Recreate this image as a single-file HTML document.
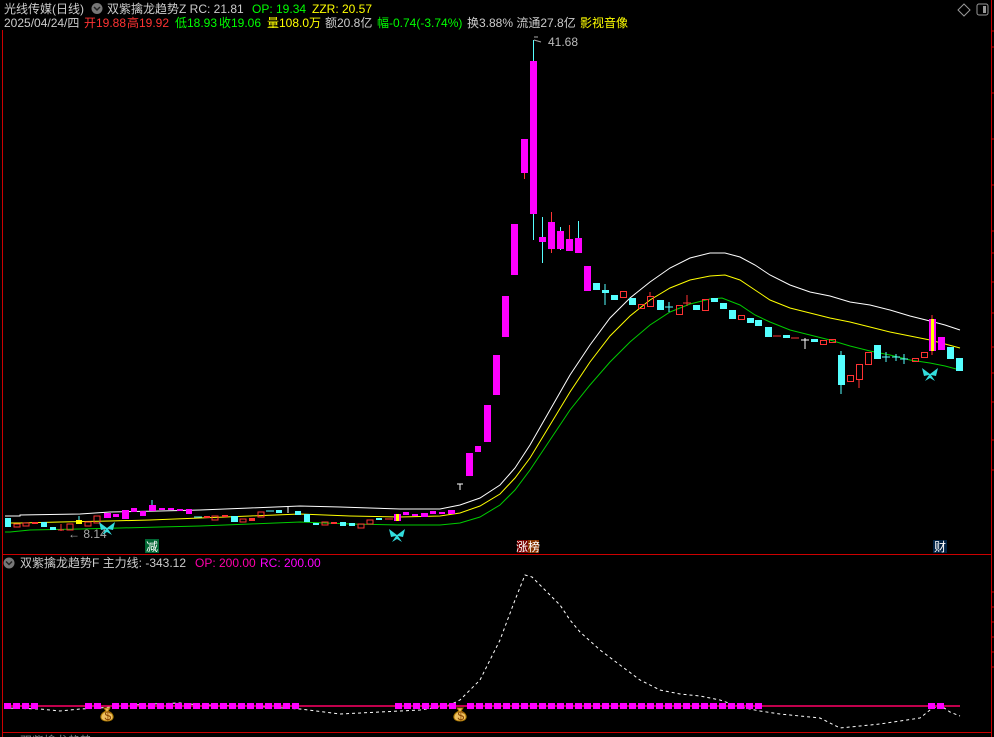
<!DOCTYPE html>
<html><head><meta charset="utf-8"><style>
html,body{margin:0;padding:0;background:#000;width:994px;height:737px;overflow:hidden}
svg{display:block}
text{font-family:"Liberation Sans","Noto Sans CJK SC",sans-serif;font-size:12px}
</style></head><body>
<svg width="994" height="737" viewBox="0 0 994 737" xmlns="http://www.w3.org/2000/svg">
<rect width="994" height="737" fill="#000"/>
<line x1="2.5" y1="30" x2="2.5" y2="737" stroke="#c00" stroke-width="1"/>
<line x1="991.5" y1="0" x2="991.5" y2="737" stroke="#c00"/>
<line x1="2" y1="554.5" x2="991" y2="554.5" stroke="#c00"/>
<line x1="2" y1="732.5" x2="991" y2="732.5" stroke="#c00"/>
<g stroke="#c00">
<line x1="991" y1="31" x2="994" y2="31"/><line x1="991" y1="47" x2="994" y2="47"/>
<line x1="991" y1="93" x2="994" y2="93"/><line x1="991" y1="139" x2="994" y2="139"/>
<line x1="991" y1="185" x2="994" y2="185"/><line x1="991" y1="231" x2="994" y2="231"/>
<line x1="991" y1="253" x2="994" y2="253"/><line x1="991" y1="282" x2="994" y2="282"/>
<line x1="991" y1="313" x2="994" y2="313"/><line x1="991" y1="347" x2="994" y2="347"/>
<line x1="991" y1="373" x2="994" y2="373"/><line x1="991" y1="402" x2="994" y2="402"/>
<line x1="991" y1="440" x2="994" y2="440"/><line x1="991" y1="470" x2="994" y2="470"/>
<line x1="991" y1="592" x2="994" y2="592"/><line x1="991" y1="607" x2="994" y2="607"/>
<line x1="991" y1="622" x2="994" y2="622"/><line x1="991" y1="637" x2="994" y2="637"/>
<line x1="991" y1="652" x2="994" y2="652"/><line x1="991" y1="667" x2="994" y2="667"/>
</g>
<path d="M964 4 L970 10 L964 16 L958 10 Z" fill="none" stroke="#999"/>
<rect x="977" y="4" width="11" height="11" rx="2" fill="none" stroke="#999"/>
<rect x="983" y="6" width="3" height="7" fill="#999"/>
<text x="4" y="13" fill="#ccc">光线传媒(日线)</text>
<circle cx="97" cy="8.5" r="5.5" fill="#777"/><path d="M94 7 L97 10 L100 7" stroke="#222" fill="none" stroke-width="1.5"/>
<text x="107" y="13" fill="#ccc">双紫擒龙趋势Z  RC: 21.81</text>
<text x="252" y="13" fill="#0f0">OP: 19.34</text>
<text x="312" y="13" fill="#ff0">ZZR: 20.57</text>
<text x="4" y="27" fill="#ccc">2025/04/24/四</text>
<text x="84" y="27" fill="#f33">开19.88</text>
<text x="127" y="27" fill="#f33">高19.92</text>
<text x="175" y="27" fill="#0f0">低18.93</text>
<text x="219" y="27" fill="#0f0">收19.06</text>
<text x="267" y="27" fill="#ff0">量108.0万</text>
<text x="325" y="27" fill="#ccc">额20.8亿</text>
<text x="377" y="27" fill="#0f0">幅-0.74(-3.74%)</text>
<text x="467" y="27" fill="#ccc">换3.88% 流通27.8亿</text>
<text x="580" y="27" fill="#ff0">影视音像</text>
<polyline fill="none" stroke="#fff" stroke-width="1" points="5,516 20,516 20,515 80,514 110,512 160,511 200,510 250,508 300,506 340,507 370,508 400,509 440,509 460,505 480,498 500,485 515,468 530,445 550,410 570,375 590,345 610,318 630,298 650,282 670,268 690,258 710,253 725,253 740,257 755,265 770,275 790,285 810,292 830,296 850,302 870,305 890,310 910,316 930,321 945,325 960,330"/>
<polyline fill="none" stroke="#ff0" stroke-width="1" points="5,523 20,523 60,522 110,521 150,520 200,518 250,516 300,514 350,516 400,517 440,516 460,513 480,506 500,494 515,478 530,458 550,425 570,392 590,362 610,336 630,316 650,300 670,288 690,280 710,276 725,275 740,280 755,290 770,300 790,308 810,313 830,318 850,322 870,327 890,332 910,336 930,340 945,344 960,348"/>
<polyline fill="none" stroke="#0c0" stroke-width="1" points="5,532 10,532 30,530 80,529 120,528 160,527 200,526 250,524 300,522 350,524 400,525 440,525 460,523 480,517 500,505 515,490 530,470 550,440 570,410 590,385 610,362 630,342 650,325 670,312 690,304 710,299 722,298 740,305 755,315 770,322 790,330 810,335 830,340 850,346 870,351 890,355 910,360 930,363 945,366 960,370"/>
<g>
<rect x="5" y="518" width="6" height="9" fill="#5ff"/>
<rect x="14" y="524" width="6" height="3" fill="none" stroke="#f33"/>
<rect x="23" y="523" width="6" height="3" fill="none" stroke="#f33"/>
<rect x="32" y="522" width="6" height="2" fill="#f33"/>
<rect x="41" y="522" width="6" height="5" fill="#5ff"/>
<rect x="50" y="527" width="6" height="3" fill="#5ff"/>
<line x1="61" y1="524" x2="61" y2="531" stroke="#f33"/><line x1="58" y1="530" x2="64" y2="530" stroke="#f33"/>
<rect x="67" y="524" width="6" height="6" fill="none" stroke="#f33"/>
<line x1="79" y1="516" x2="79" y2="524" stroke="#5ff"/><rect x="76" y="520" width="6" height="4" fill="#ff0"/>
<rect x="85" y="522" width="6" height="4" fill="none" stroke="#f33"/>
<rect x="94" y="516" width="6" height="7" fill="none" stroke="#f33"/>
<rect x="104" y="513" width="7" height="5" fill="#f0f"/>
<rect x="113" y="514" width="6" height="3" fill="#f0f"/>
<rect x="122" y="510" width="7" height="9" fill="#f0f"/>
<rect x="131" y="508" width="6" height="4" fill="#f0f"/>
<rect x="140" y="511" width="6" height="5" fill="#f0f"/>
<line x1="152" y1="500" x2="152" y2="505" stroke="#5ff"/><rect x="149" y="505" width="7" height="6" fill="#f0f"/>
<rect x="159" y="508" width="6" height="2" fill="#f0f"/>
<rect x="168" y="508" width="6" height="2" fill="#f0f"/>
<rect x="177" y="509" width="6" height="2" fill="#f0f"/>
<rect x="186" y="509" width="6" height="5" fill="#f0f"/>
<line x1="194" y1="517" x2="202" y2="517" stroke="#5ff"/>
<rect x="204" y="516" width="6" height="2" fill="#f33"/>
<rect x="212" y="516" width="6" height="4" fill="none" stroke="#f33"/>
<rect x="222" y="515" width="6" height="2" fill="#f33"/>
<rect x="231" y="516" width="7" height="6" fill="#5ff"/>
<rect x="240" y="519" width="6" height="3" fill="none" stroke="#f33"/>
<rect x="249" y="518" width="6" height="3" fill="#f33"/>
<rect x="258" y="512" width="6" height="5" fill="none" stroke="#f33"/>
<line x1="266" y1="511" x2="274" y2="511" stroke="#5ff"/>
<rect x="276" y="510" width="6" height="3" fill="#5ff"/>
<line x1="288" y1="506" x2="288" y2="513" stroke="#fff"/>
<rect x="295" y="511" width="6" height="4" fill="#5ff"/>
<rect x="304" y="514" width="6" height="8" fill="#5ff"/>
<rect x="313" y="523" width="6" height="2" fill="#5ff"/>
<rect x="322" y="522" width="6" height="3" fill="none" stroke="#f33"/>
<rect x="331" y="522" width="6" height="2" fill="#f33"/>
<rect x="340" y="522" width="6" height="4" fill="#5ff"/>
<rect x="349" y="523" width="6" height="3" fill="#5ff"/>
<rect x="358" y="524" width="6" height="4" fill="none" stroke="#f33"/>
<rect x="367" y="520" width="6" height="4" fill="none" stroke="#f33"/>
<rect x="376" y="518" width="6" height="2" fill="#5ff"/>
<line x1="385" y1="519" x2="393" y2="519" stroke="#f33"/>
<rect x="394" y="514" width="7" height="7" fill="#f0f"/><rect x="396" y="514" width="3" height="7" fill="#ff0"/>
<rect x="403" y="512" width="6" height="3" fill="#f0f"/>
<rect x="412" y="514" width="6" height="2" fill="#f0f"/>
<rect x="421" y="513" width="7" height="4" fill="#f0f"/>
<rect x="430" y="511" width="6" height="3" fill="#f0f"/>
<rect x="439" y="512" width="6" height="2" fill="#f0f"/>
<rect x="448" y="510" width="7" height="4" fill="#f0f"/>
<line x1="457" y1="484" x2="463" y2="484" stroke="#fff"/><line x1="460" y1="484" x2="460" y2="490" stroke="#fff"/>
</g>
<text x="68" y="538" fill="#aaa" font-size="12">← 8.14</text>
<g stroke-width="1">
<line x1="533.5" y1="40" x2="533.5" y2="240" stroke="#5ff"/>
<line x1="542.5" y1="217" x2="542.5" y2="263" stroke="#5ff"/>
<line x1="551.5" y1="212" x2="551.5" y2="253" stroke="#f33"/>
<line x1="560.5" y1="227" x2="560.5" y2="250" stroke="#5ff"/>
<line x1="569.5" y1="225" x2="569.5" y2="251" stroke="#f33"/>
<line x1="578.5" y1="221" x2="578.5" y2="253" stroke="#5ff"/>
<line x1="524.5" y1="173" x2="524.5" y2="179" stroke="#f33"/>
</g>
<g fill="#f0f">
<rect x="466" y="453" width="7" height="23"/>
<rect x="475" y="446" width="6" height="6"/>
<rect x="484" y="405" width="7" height="37"/>
<rect x="493" y="355" width="7" height="40"/>
<rect x="502" y="296" width="7" height="41"/>
<rect x="511" y="224" width="7" height="51"/>
<rect x="521" y="139" width="7" height="34"/>
<rect x="530" y="61" width="7" height="153"/>
<rect x="539" y="237" width="7" height="5"/>
<rect x="548" y="222" width="7" height="27"/>
<rect x="557" y="231" width="7" height="18"/>
<rect x="566" y="239" width="7" height="12"/>
<rect x="575" y="238" width="7" height="15"/>
<rect x="584" y="266" width="7" height="25"/>
</g>
<path d="M534 37 L538 37 M534 40 L541 42" stroke="#aaa" fill="none"/>
<text x="548" y="46" fill="#bbb">41.68</text>
<g>
<rect x="593" y="283" width="7" height="7" fill="#5ff"/>
<line x1="605" y1="284" x2="605" y2="305" stroke="#5ff"/><rect x="602" y="290" width="7" height="3" fill="#5ff"/>
<rect x="611" y="295" width="7" height="5" fill="#5ff"/>
<rect x="620.5" y="291.5" width="6" height="6" fill="none" stroke="#f33"/>
<rect x="629" y="298" width="7" height="7" fill="#5ff"/>
<rect x="638.5" y="304.5" width="6" height="4" fill="none" stroke="#f33"/>
<rect x="647.5" y="296.5" width="6" height="10" fill="none" stroke="#f33"/><line x1="650" y1="292" x2="650" y2="296" stroke="#f33"/>
<rect x="657" y="300" width="7" height="10" fill="#5ff"/>
<line x1="665" y1="307" x2="673" y2="307" stroke="#5ff"/><line x1="669" y1="302" x2="669" y2="312" stroke="#5ff"/>
<rect x="676.5" y="305.5" width="6" height="9" fill="none" stroke="#f33"/>
<line x1="683" y1="303" x2="691" y2="303" stroke="#f33"/><line x1="687" y1="295" x2="687" y2="306" stroke="#f33"/>
<rect x="693" y="305" width="7" height="5" fill="#5ff"/>
<rect x="702.5" y="299.5" width="6" height="11" fill="none" stroke="#f33"/>
<rect x="711" y="298" width="7" height="4" fill="#5ff"/>
<rect x="720" y="303" width="7" height="6" fill="#5ff"/>
<rect x="729" y="310" width="7" height="9" fill="#5ff"/>
<rect x="738.5" y="315.5" width="6" height="4" fill="none" stroke="#f33"/>
<rect x="747" y="318" width="7" height="5" fill="#5ff"/>
<rect x="755" y="320" width="7" height="6" fill="#5ff"/>
<rect x="765" y="327" width="7" height="10" fill="#5ff"/>
<line x1="773" y1="336" x2="781" y2="336" stroke="#f33"/>
<rect x="783" y="335" width="7" height="3" fill="#5ff"/>
<line x1="791" y1="338" x2="799" y2="338" stroke="#f33"/>
<line x1="801" y1="340" x2="809" y2="340" stroke="#fff"/><line x1="805" y1="338" x2="805" y2="349" stroke="#fff"/>
<rect x="811" y="339" width="7" height="3" fill="#5ff"/>
<rect x="820.5" y="340.5" width="6" height="4" fill="none" stroke="#f33"/>
<rect x="829.5" y="339.5" width="6" height="3" fill="none" stroke="#f33"/>
<line x1="841" y1="351" x2="841" y2="394" stroke="#5ff"/><rect x="838" y="355" width="7" height="30" fill="#5ff"/>
<rect x="847.5" y="375.5" width="6" height="6" fill="none" stroke="#f33"/>
<line x1="859" y1="379" x2="859" y2="388" stroke="#f33"/><rect x="856.5" y="364.5" width="6" height="15" fill="none" stroke="#f33"/>
<rect x="865.5" y="352.5" width="6" height="12" fill="none" stroke="#f33"/>
<rect x="874" y="345" width="7" height="14" fill="#5ff"/>
<line x1="882" y1="357" x2="890" y2="357" stroke="#5ff"/><line x1="886" y1="352" x2="886" y2="362" stroke="#5ff"/>
<line x1="892" y1="357" x2="900" y2="357" stroke="#5ff"/><line x1="896" y1="354" x2="896" y2="361" stroke="#5ff"/>
<line x1="900" y1="359" x2="908" y2="359" stroke="#5ff"/><line x1="904" y1="354" x2="904" y2="364" stroke="#5ff"/>
<rect x="912.5" y="358.5" width="6" height="3" fill="none" stroke="#f33"/>
<rect x="921.5" y="352.5" width="6" height="5" fill="none" stroke="#f33"/>
<line x1="932" y1="315" x2="932" y2="355" stroke="#f33"/>
<rect x="929" y="319" width="7" height="32" fill="#f0f"/><rect x="931" y="319" width="3" height="32" fill="#ff0"/>
<rect x="938" y="337" width="7" height="13" fill="#f0f"/>
<rect x="947" y="347" width="7" height="12" fill="#5ff"/>
<rect x="956" y="358" width="7" height="13" fill="#5ff"/>
</g>
<g fill="#3dd">
<path d="M107 528 L99 522 L101 530 L106 529 L102 535 L107 532 L112 535 L108 529 L113 530 L115 522 Z"/>
<path d="M397 535 L389 529 L391 537 L396 536 L392 542 L397 539 L402 542 L398 536 L403 537 L405 529 Z"/>
<path d="M930 374 L922 368 L924 376 L929 375 L925 381 L930 378 L935 381 L931 375 L936 376 L938 368 Z"/>
</g>
<rect x="145" y="539" width="14" height="14" fill="#063"/><text x="146" y="551" fill="#fff">减</text>
<rect x="517" y="540" width="11" height="13" fill="#700"/><rect x="528" y="540" width="11" height="13" fill="#830"/><text x="516" y="551" fill="#fff">涨榜</text>
<rect x="933" y="540" width="14" height="13" fill="#024"/><text x="934" y="551" fill="#fff">财</text>
<circle cx="9" cy="563" r="5.5" fill="#777"/><path d="M6 561.5 L9 564.5 L12 561.5" stroke="#222" fill="none" stroke-width="1.5"/>
<text x="20" y="567" fill="#ccc">双紫擒龙趋势F  主力线: -343.12</text>
<text x="195" y="567" fill="#f0a">OP: 200.00</text>
<text x="260" y="567" fill="#f0f">RC: 200.00</text>
<polyline fill="none" stroke="#fff" stroke-dasharray="3,3" points="5,708 40,709 60,711 80,709 100,708 120,706 150,704 180,703 200,705 250,706 300,709 340,714 380,712 420,710 450,705 460,700 480,680 500,640 515,600 525,575 532,577 545,590 560,605 570,620 580,632 600,650 620,665 640,680 660,690 680,694 700,696 720,700 740,707 760,711 780,714 800,716 820,718 840,728 860,726 880,724 900,721 920,718 930,710 940,705 950,712 960,716"/>
<line x1="5" y1="706" x2="960" y2="706" stroke="#f06" stroke-width="1.5"/>
<g fill="#f0f">
<rect x="4" y="703" width="7" height="6"/><rect x="13" y="703" width="7" height="6"/><rect x="22" y="703" width="7" height="6"/><rect x="31" y="703" width="7" height="6"/>
<rect x="85" y="703" width="7" height="6"/><rect x="94" y="703" width="7" height="6"/><rect x="112" y="703" width="7" height="6"/><rect x="121" y="703" width="7" height="6"/><rect x="130" y="703" width="7" height="6"/><rect x="139" y="703" width="7" height="6"/><rect x="148" y="703" width="7" height="6"/><rect x="157" y="703" width="7" height="6"/><rect x="166" y="703" width="7" height="6"/><rect x="175" y="703" width="7" height="6"/><rect x="184" y="703" width="7" height="6"/><rect x="193" y="703" width="7" height="6"/><rect x="202" y="703" width="7" height="6"/><rect x="211" y="703" width="7" height="6"/><rect x="220" y="703" width="7" height="6"/><rect x="229" y="703" width="7" height="6"/><rect x="238" y="703" width="7" height="6"/><rect x="247" y="703" width="7" height="6"/><rect x="256" y="703" width="7" height="6"/><rect x="265" y="703" width="7" height="6"/><rect x="274" y="703" width="7" height="6"/><rect x="283" y="703" width="7" height="6"/><rect x="292" y="703" width="7" height="6"/>
<rect x="395" y="703" width="7" height="6"/><rect x="404" y="703" width="7" height="6"/><rect x="413" y="703" width="7" height="6"/><rect x="422" y="703" width="7" height="6"/><rect x="431" y="703" width="7" height="6"/><rect x="440" y="703" width="7" height="6"/><rect x="449" y="703" width="7" height="6"/><rect x="467" y="703" width="7" height="6"/><rect x="476" y="703" width="7" height="6"/><rect x="485" y="703" width="7" height="6"/><rect x="494" y="703" width="7" height="6"/><rect x="503" y="703" width="7" height="6"/><rect x="512" y="703" width="7" height="6"/><rect x="521" y="703" width="7" height="6"/><rect x="530" y="703" width="7" height="6"/><rect x="539" y="703" width="7" height="6"/><rect x="548" y="703" width="7" height="6"/><rect x="557" y="703" width="7" height="6"/><rect x="566" y="703" width="7" height="6"/><rect x="575" y="703" width="7" height="6"/><rect x="584" y="703" width="7" height="6"/><rect x="593" y="703" width="7" height="6"/><rect x="602" y="703" width="7" height="6"/><rect x="611" y="703" width="7" height="6"/><rect x="620" y="703" width="7" height="6"/><rect x="629" y="703" width="7" height="6"/><rect x="638" y="703" width="7" height="6"/><rect x="647" y="703" width="7" height="6"/><rect x="656" y="703" width="7" height="6"/><rect x="665" y="703" width="7" height="6"/><rect x="674" y="703" width="7" height="6"/><rect x="683" y="703" width="7" height="6"/><rect x="692" y="703" width="7" height="6"/><rect x="701" y="703" width="7" height="6"/><rect x="710" y="703" width="7" height="6"/><rect x="719" y="703" width="7" height="6"/><rect x="728" y="703" width="7" height="6"/><rect x="737" y="703" width="7" height="6"/><rect x="746" y="703" width="7" height="6"/><rect x="755" y="703" width="7" height="6"/>
<rect x="928" y="703" width="7" height="6"/><rect x="937" y="703" width="7" height="6"/>
</g>
<g>
<path d="M104 708 L110 708 L108 711 Q114 714 113 718 Q112 721 107 721 Q102 721 101 718 Q100 714 106 711 Z" fill="#eec060" stroke="#a70"/>
<text x="104.5" y="720" fill="#840" font-size="8">$</text>
<path d="M457 708 L463 708 L461 711 Q467 714 466 718 Q465 721 460 721 Q455 721 454 718 Q453 714 459 711 Z" fill="#eec060" stroke="#a70"/>
<text x="457.5" y="720" fill="#840" font-size="8">$</text>
</g>
<text x="20" y="745" fill="#888">双紫擒龙趋势</text>
</svg>
</body></html>
